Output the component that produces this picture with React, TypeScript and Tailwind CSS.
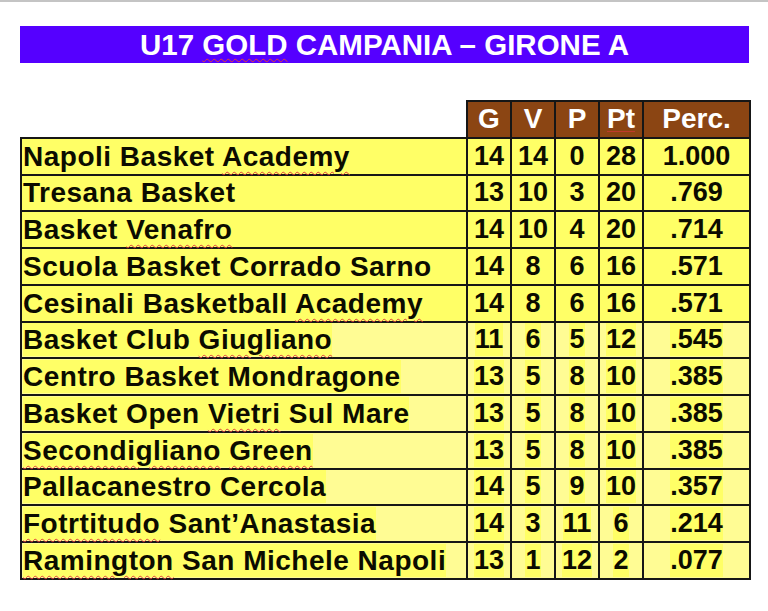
// App.tsx — U17 Gold Campania, Girone A standings (slide screenshot)

type Row = {
  name: (string | { w: string })[];
  g: number;
  v: number;
  p: number;
  pt: number;
  perc: string;
};

// { w } marks a word flagged by the spell checker (wavy red underline)
const rows: Row[] = [
  { name: ['Napoli Basket ', { w: 'Academy' }], g: 14, v: 14, p: 0, pt: 28, perc: '1.000' },
  { name: ['Tresana Basket'], g: 13, v: 10, p: 3, pt: 20, perc: '.769' },
  { name: ['Basket ', { w: 'Venafro' }], g: 14, v: 10, p: 4, pt: 20, perc: '.714' },
  { name: ['Scuola Basket Corrado Sarno'], g: 14, v: 8, p: 6, pt: 16, perc: '.571' },
  { name: ['Cesinali Basketball ', { w: 'Academy' }], g: 14, v: 8, p: 6, pt: 16, perc: '.571' },
  { name: ['Basket Club ', { w: 'Giugliano' }], g: 11, v: 6, p: 5, pt: 12, perc: '.545' },
  { name: ['Centro Basket Mondragone'], g: 13, v: 5, p: 8, pt: 10, perc: '.385' },
  { name: ['Basket Open ', { w: 'Vietri' }, ' Sul Mare'], g: 13, v: 5, p: 8, pt: 10, perc: '.385' },
  { name: [{ w: 'Secondigliano' }, ' ', { w: 'Green' }], g: 13, v: 5, p: 8, pt: 10, perc: '.385' },
  { name: ['Pallacanestro Cercola'], g: 14, v: 5, p: 9, pt: 10, perc: '.357' },
  { name: [{ w: 'Fotrtitudo' }, ' Sant’Anastasia'], g: 14, v: 3, p: 11, pt: 6, perc: '.214' },
  { name: [{ w: 'Ramington' }, ' San Michele Napoli'], g: 13, v: 1, p: 12, pt: 2, perc: '.077' },
];

const spell = 'underline decoration-wavy decoration-[#e0403a] decoration-1 underline-offset-[5px]';
const cell = 'border-2 border-[#161616] h-[36.75px] p-0 align-middle';

export default function App() {
  return (
    <div
      className="w-[768px] h-[611px] bg-white overflow-hidden"
      style={{ fontFamily: '"Liberation Sans", Arial, sans-serif' }}
    >
      {/* top rule */}
      <div className="h-[2px] bg-[#c4c4c4]" />

      {/* Title bar */}
      <div className="mt-[24px] ml-[20px] w-[729px] h-[37px] bg-[#5500ff] flex items-center justify-center">
        <h1 className="text-white font-bold text-[29.5px] leading-none">
          U17 <span className="underline decoration-wavy decoration-[#e0403a] decoration-1 underline-offset-[3px]">GOLD</span> CAMPANIA – GIRONE A
        </h1>
      </div>

      {/* Standings table */}
      <table className="mt-[37px] ml-[20px] w-[729px] table-fixed border-collapse text-[#0c0c00] font-bold">
        <colgroup>
          <col className="w-[446px]" />
          <col className="w-[44px]" />
          <col className="w-[44px]" />
          <col className="w-[44px]" />
          <col className="w-[44px]" />
          <col className="w-[107px]" />
        </colgroup>
        <thead>
          <tr className="text-white text-[28px] leading-none">
            <th className="p-0" />
            {['G', 'V', 'P'].map((h) => (
              <th key={h} className={`${cell} bg-[#8b4513] font-bold`}>{h}</th>
            ))}
            <th className={`${cell} bg-[#8b4513] font-bold`}>
              <span className="underline decoration-[#c0392b] decoration-1 underline-offset-[3px]">Pt</span>
            </th>
            <th className={`${cell} bg-[#8b4513] font-bold`}>Perc.</th>
          </tr>
        </thead>
        <tbody className="leading-[33px]">
          {rows.map((r, i) => {
            // lower rows: text sits on a highlight over a paler cell
            const faded = i >= 5;
            const bg = faded ? 'bg-[#fffc94]' : 'bg-[#ffff66]';
            const hl = faded ? 'inline-block bg-[#ffff66]' : 'inline-block';
            return (
              <tr key={i}>
                <td className={`${cell} ${bg} pl-[1px] text-left whitespace-nowrap text-[28px]`}>
                  <span className={`${hl} tracking-[0.5px]`}>
                    {r.name.map((part, j) =>
                      typeof part === 'string' ? (
                        <span key={j}>{part}</span>
                      ) : (
                        <span key={j} className={spell}>{part.w}</span>
                      ),
                    )}
                  </span>
                </td>
                {[r.g, r.v, r.p, r.pt].map((n, j) => (
                  <td key={j} className={`${cell} ${bg} text-center text-[27px]`}>
                    <span className={hl}>{n}</span>
                  </td>
                ))}
                <td className={`${cell} ${bg} text-center text-[27px]`}>
                  <span className={hl}>{r.perc}</span>
                </td>
              </tr>
            );
          })}
        </tbody>
      </table>
    </div>
  );
}
